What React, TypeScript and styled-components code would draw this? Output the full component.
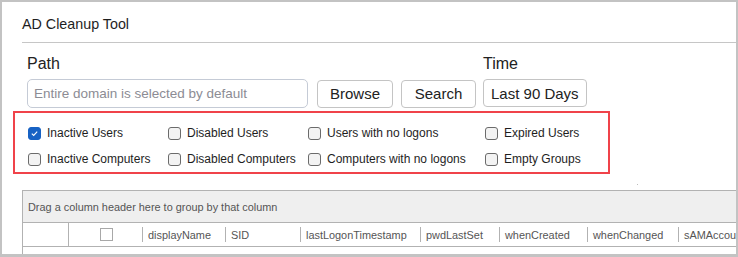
import React, { FC } from 'react'
import styled, { createGlobalStyle } from 'styled-components'

const GlobalStyle = createGlobalStyle`
  html, body {
    margin: 0;
    padding: 0;
    background: #ffffff;
  }
  * {
    box-sizing: border-box;
  }
`;

const Window = styled.div`
  width: 738px;
  height: 257px;
  border: 2px solid #c3c3c3;
  border-bottom-width: 3px;
  background: #ffffff;
  overflow: hidden;
  font-family: "Liberation Sans", Arial, sans-serif;
  color: #222;
`;

const TitleBar = styled.div`
  margin-left: 20px;
  height: 41px;
  border-bottom: 1px solid #c6c6c6;
  display: flex;
  align-items: center;
  padding-top: 4px;
  font-size: 14.3px;
  color: #1e1e1e;
`;

const Form = styled.div`
  display: flex;
  gap: 7px;
  margin: 12px 0 0 23px;
`;

const Field = styled.div`
  display: flex;
  flex-direction: column;
`;

const Label = styled.div`
  font-size: 16px;
  line-height: 18px;
  color: #222;
  margin-left: ${props => props.offset || 0}px;
  margin-bottom: 6px;
`;

const Controls = styled.div`
  display: flex;
  gap: 8px;
  align-items: center;
`;

const Input = styled.input`
  width: 281px;
  height: 29px;
  margin-left: 2px;
  margin-right: 1px;
  border: 1px solid #c5cbd6;
  border-radius: 5px;
  padding: 0 6px;
  font-family: "Liberation Sans", Arial, sans-serif;
  font-size: 13.5px;
  outline: none;
  &::placeholder {
    color: #8c8c94;
  }
`;

const Button = styled.button`
  height: 28px;
  min-width: ${props => props.min || 0}px;
  padding: 0 ${props => props.pad || 12}px;
  border: 1px solid #c4c4c4;
  border-radius: 4px;
  background: #ffffff;
  font-family: "Liberation Sans", Arial, sans-serif;
  font-size: 15px;
  color: #222;
  margin-left: ${props => props.offset || 0}px;
`;

const Filters = styled.div`
  margin: 3px 0 0 11px;
  width: 597px;
  height: 63px;
  border: 2px solid #f0434a;
  display: grid;
  grid-template-columns: 140px 140px 177px auto;
  grid-template-rows: 26px 26px;
  padding: 7px 0 0 13px;
`;

const Option = styled.label`
  display: flex;
  align-items: center;
  gap: 6px;
  font-size: 12px;
  color: #1e1e1e;
  white-space: nowrap;
`;

const Box = styled.span`
  width: 13px;
  height: 13px;
  border-radius: 3px;
  border: 1px solid ${props => (props.checked ? '#1762c4' : '#6b6b6b')};
  background: ${props => (props.checked ? '#1762c4' : '#f3f3f3')};
  display: flex;
  align-items: center;
  justify-content: center;
  flex-shrink: 0;
`;

const Grid = styled.div`
  margin: 16px 0 0 20px;
  border: 1px solid #b2b2b2;
  border-right: none;
  font-size: 10.9px;
  color: #555;
  height: 70px;
`;

const GroupPanel = styled.div`
  height: 32px;
  background: #efefef;
  border-bottom: 1px solid #b2b2b2;
  display: flex;
  align-items: center;
  padding-left: 5px;
`;

const HeaderRow = styled.div`
  display: flex;
  height: 24px;
  border-bottom: 1px solid #b2b2b2;
  white-space: nowrap;
`;

const Cell = styled.div`
  width: ${props => props.w}px;
  flex-shrink: 0;
  display: flex;
  align-items: center;
  justify-content: ${props => (props.center ? 'center' : 'flex-start')};
  padding-left: ${props => (props.center ? 0 : 5)}px;
  position: relative;
  border-right: ${props => (props.full ? '1px solid #b2b2b2' : 'none')};
  &::after {
    content: '';
    display: ${props => (props.full ? 'none' : 'block')};
    position: absolute;
    right: 0;
    top: 4px;
    bottom: 4px;
    border-right: 1px solid #b2b2b2;
  }
`;

const HeadBox = styled.span`
  width: 13px;
  height: 13px;
  border: 1px solid #a8a8a8;
  background: #fff;
`;

const Dot = styled.span`
  position: absolute;
  left: 637px;
  top: 184px;
  width: 1px;
  height: 1px;
  background: #bdbdbd;
`;

type OptionProps = { label: string; checked?: boolean }

const Check: FC<OptionProps> = ({ label, checked }) => (
  <Option>
    <Box checked={checked}>
      {checked && (
        <svg width="9" height="9" viewBox="0 0 9 9">
          <path d="M1.8 4.6 L3.7 6.4 L7.2 2.6" fill="none" stroke="#fff" strokeWidth="1.1" />
        </svg>
      )}
    </Box>
    {label}
  </Option>
)

const columns = [
  { name: 'displayName', w: 83 },
  { name: 'SID', w: 75 },
  { name: 'lastLogonTimestamp', w: 120 },
  { name: 'pwdLastSet', w: 79 },
  { name: 'whenCreated', w: 88 },
  { name: 'whenChanged', w: 91 },
  { name: 'sAMAccountName', w: 110 },
]

const App: FC = () => {
  return (
    <>
      <GlobalStyle />
      <Window>
        <TitleBar>AD Cleanup Tool</TitleBar>
        <Form>
          <Field>
            <Label offset={2}>Path</Label>
            <Controls>
              <Input placeholder="Entire domain is selected by default" />
              <Button min={76}>Browse</Button>
              <Button min={75}>Search</Button>
            </Controls>
          </Field>
          <Field>
            <Label>Time</Label>
            <Controls>
              <Button pad={7}>Last 90 Days</Button>
            </Controls>
          </Field>
        </Form>
        <Filters>
          <Check label="Inactive Users" checked />
          <Check label="Disabled Users" />
          <Check label="Users with no logons" />
          <Check label="Expired Users" />
          <Check label="Inactive Computers" />
          <Check label="Disabled Computers" />
          <Check label="Computers with no logons" />
          <Check label="Empty Groups" />
        </Filters>
        <Dot />
        <Grid>
          <GroupPanel>Drag a column header here to group by that column</GroupPanel>
          <HeaderRow>
            <Cell w={46} full />
            <Cell w={74} center>
              <HeadBox />
            </Cell>
            {columns.map(c => (
              <Cell key={c.name} w={c.w}>{c.name}</Cell>
            ))}
          </HeaderRow>
        </Grid>
      </Window>
    </>
  )
}

export default App
